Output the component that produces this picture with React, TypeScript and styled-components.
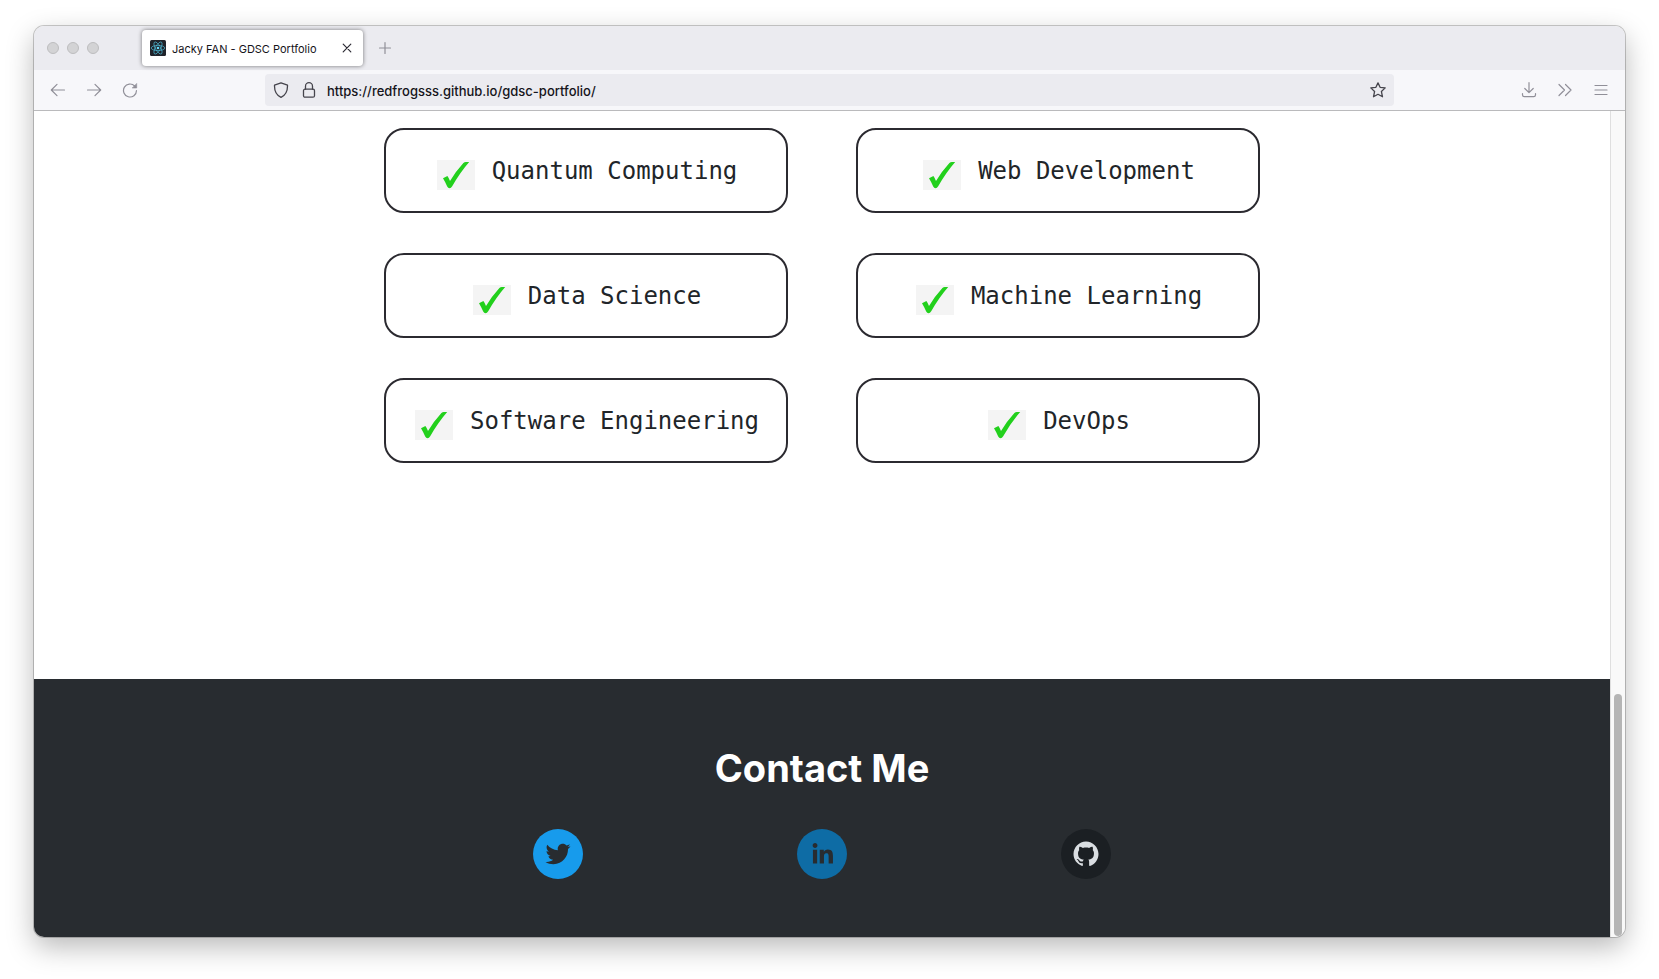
import React from "react";
import styled, { createGlobalStyle } from "styled-components";

const GlobalStyle = createGlobalStyle`
  *, *::before, *::after { box-sizing: border-box; }
  body {
    margin: 0;
    background: #ffffff;
    color: #212529;
    font-family: Inter, "Liberation Sans", sans-serif;
  }
  button, input { font: inherit; color: inherit; }
`;

const Desktop = styled.div`
  min-height: 100vh;
  padding: 26px 34px 42px;
  overflow: hidden;
`;

const BrowserWindow = styled.div`
  overflow: hidden;
  border-radius: 10px;
  background: #ffffff;
  box-shadow: 0 0 0 1px rgba(0, 0, 0, 0.2), 0 10px 28px rgba(0, 0, 0, 0.28);
`;

const TabBar = styled.header`
  display: flex;
  align-items: center;
  height: 44px;
  padding-left: 13px;
  background: #ebebf0;
`;

const WindowControls = styled.div`
  display: flex;
  gap: 8px;
  margin-right: 43px;
`;

const WindowDot = styled.button`
  width: 12px;
  height: 12px;
  padding: 0;
  border: 1px solid #bdbdbf;
  border-radius: 50%;
  background: #d3d3d5;
`;

const Tab = styled.div`
  display: flex;
  align-items: center;
  width: 221px;
  height: 36px;
  padding: 0 8px;
  border-radius: 4px;
  background: #ffffff;
  box-shadow: 0 0 4px rgba(0, 0, 0, 0.5);
`;

const TabTitle = styled.span`
  flex: 1;
  margin-left: 6px;
  padding-top: 2px;
  font-size: 11px;
  line-height: 16px;
  color: #15141a;
  white-space: nowrap;
`;

const IconButton = styled.button<{ $tone?: string }>`
  display: flex;
  align-items: center;
  justify-content: center;
  width: 16px;
  height: 16px;
  padding: 0;
  border: 0;
  background: none;
  color: ${(p) => p.$tone ?? "#908f98"};
`;

const NewTab = styled.div`
  margin-left: 14px;
`;

const Toolbar = styled.nav`
  display: flex;
  align-items: center;
  height: 41px;
  padding: 0 16px;
  border-bottom: 1px solid #bababc;
  background: #f7f7fa;
`;

const ToolGroup = styled.div`
  display: flex;
  gap: 20px;
`;

const AddressBar = styled.div`
  display: flex;
  flex: 1;
  align-items: center;
  height: 32px;
  margin: 0 127px;
  padding: 0 8px;
  gap: 12px;
  border-radius: 4px;
  background: #ebebf0;
`;

const AddressInput = styled.input`
  flex: 1;
  min-width: 0;
  padding: 2px 0 0;
  margin-left: -2px;
  border: 0;
  outline: 0;
  background: none;
  color: #15141a;
  font-size: 13px;
  font-weight: 500;
  line-height: 20px;
`;

const Viewport = styled.div`
  display: flex;
`;

const Page = styled.main`
  flex: 1;
  min-width: 0;
`;

const ScrollTrack = styled.div`
  display: flex;
  align-items: flex-end;
  width: 15px;
  padding: 1px 3px;
  border-left: 1px solid #dfdfdf;
  background: #f9f9f9;
`;

const ScrollThumb = styled.div`
  width: 8px;
  height: 242px;
  border-radius: 4px;
  background: #b5b5b5;
`;

const Skills = styled.ul`
  display: grid;
  grid-template-columns: 1fr 1fr;
  gap: 40px 68px;
  max-width: 876px;
  margin: 0 auto;
  padding: 17px 0 216px;
  list-style: none;
`;

const SkillCard = styled.li`
  display: flex;
  align-items: center;
  justify-content: center;
  gap: 17px;
  height: 85px;
  padding-left: 2px;
  border: 2px solid #2b2a30;
  border-radius: 20px;
`;

const SkillName = styled.span`
  font-family: "DejaVu Sans Mono", monospace;
  font-size: 24px;
  line-height: 36px;
  white-space: nowrap;
`;

const CheckTile = styled.svg`
  width: 38px;
  height: 30px;
  margin-top: 8px;
  background: #f4f4f4;
`;

const Footer = styled.footer`
  padding: 65px 0 58px;
  background: #282c30;
`;

const FooterTitle = styled.h2`
  margin: 0 0 37px;
  color: #ffffff;
  font-size: 38px;
  font-weight: 700;
  line-height: 48px;
  text-align: center;
`;

const SocialRow = styled.div`
  display: grid;
  grid-template-columns: repeat(3, 1fr);
  justify-items: center;
  max-width: 792px;
  margin: 0 auto;
`;

const SocialLink = styled.a<{ $disc: string; $glyph: string }>`
  width: 50px;
  height: 50px;
  border-radius: 50%;
  background: ${(p) => p.$disc};
  color: ${(p) => p.$glyph};

  svg { display: block; width: 50px; height: 50px; }
`;

const Line = ({ children, width = 1.2 }: { children: React.ReactNode; width?: number }) => (
  <svg
    width="16"
    height="16"
    viewBox="0 0 16 16"
    fill="none"
    stroke="currentColor"
    strokeWidth={width}
    strokeLinecap="round"
    strokeLinejoin="round"
    aria-hidden="true"
  >
    {children}
  </svg>
);

const Favicon = () => (
  <svg width="16" height="16" viewBox="0 0 16 16" aria-hidden="true">
    <rect width="16" height="16" rx="1.5" fill="#20232a" />
    <g fill="none" stroke="#4fb6d2" strokeWidth="0.7">
      <ellipse cx="8" cy="8" rx="6.8" ry="2.6" />
      <ellipse cx="8" cy="8" rx="6.8" ry="2.6" transform="rotate(60 8 8)" />
      <ellipse cx="8" cy="8" rx="6.8" ry="2.6" transform="rotate(120 8 8)" />
    </g>
    <circle cx="8" cy="8" r="1.3" fill="#61dafb" />
  </svg>
);

const Check = () => (
  <CheckTile viewBox="0 0 38 30" aria-hidden="true">
    <path d="M6 18.2L10.4 16.1Q11.800 18 13 21Q19 11 26.400 3Q27.600 1.900 29 2H32.200Q23 12.500 15.200 26.300Q14 28.200 12.600 28.200Q11 28.200 10.200 26.500Q8.600 22.500 6 18.200Z" fill="#22d01c" />
  </CheckTile>
);

const skills = [
  "Quantum Computing",
  "Web Development",
  "Data Science",
  "Machine Learning",
  "Software Engineering",
  "DevOps",
];

const socials = [
  {
    name: "Twitter",
    href: "https://twitter.com/",
    disc: "#179bec",
    glyph: "#282c30",
    path: "M48,22.1c-1.2,0.5-2.4,0.9-3.8,1c1.4-0.8,2.4-2.1,2.9-3.6c-1.3,0.8-2.7,1.3-4.2,1.6C41.7,19.8,40,19,38.2,19c-3.6,0-6.6,2.9-6.6,6.6c0,0.5,0.1,1,0.2,1.5c-5.5-0.3-10.3-2.9-13.5-6.9c-0.6,1-0.9,2.1-0.9,3.3c0,2.3,1.2,4.3,2.9,5.5c-1.1,0-2.1-0.3-3-0.8c0,0,0,0.1,0,0.1c0,3.2,2.3,5.8,5.3,6.4c-0.6,0.1-1.1,0.2-1.7,0.2c-0.4,0-0.8,0-1.2-0.1c0.8,2.6,3.3,4.5,6.1,4.6c-2.2,1.8-5.1,2.8-8.2,2.8c-0.5,0-1.1,0-1.6-0.1c2.9,1.9,6.4,2.9,10.1,2.9c12.1,0,18.7-10,18.7-18.7c0-0.3,0-0.6,0-0.8C46,24.5,47.1,23.4,48,22.1z",
  },
  {
    name: "LinkedIn",
    href: "https://www.linkedin.com/",
    disc: "#0e6ca5",
    glyph: "#282c30",
    path: "M20.4,44h5.4V26.6h-5.4V44z M23.1,18c-1.7,0-3.1,1.4-3.1,3.1c0,1.7,1.4,3.1,3.1,3.1c1.7,0,3.1-1.4,3.1-3.1C26.2,19.4,24.8,18,23.1,18z M39.5,26.2c-2.6,0-4.4,1.4-5.1,2.8h-0.1v-2.4h-5.2V44h5.4v-8.6c0-2.3,0.4-4.5,3.2-4.5c2.8,0,2.8,2.6,2.8,4.6V44H46v-9.5C46,29.8,45,26.2,39.5,26.2z",
  },
  {
    name: "GitHub",
    href: "https://github.com/redfrogsss",
    disc: "#1b1f23",
    glyph: "#dadee2",
    path: "M32,16c-8.8,0-16,7.2-16,16c0,7.1,4.6,13.1,10.9,15.2c0.8,0.1,1.1-0.3,1.1-0.8c0-0.4,0-1.4,0-2.7c-4.5,1-5.4-2.1-5.4-2.1c-0.7-1.8-1.8-2.3-1.8-2.3c-1.5-1,0.1-1,0.1-1c1.6,0.1,2.5,1.6,2.5,1.6c1.4,2.4,3.7,1.7,4.7,1.3c0.1-1,0.6-1.7,1-2.1c-3.6-0.4-7.3-1.8-7.3-7.9c0-1.7,0.6-3.2,1.6-4.3c-0.2-0.4-0.7-2,0.2-4.2c0,0,1.3-0.4,4.4,1.6c1.3-0.4,2.6-0.5,4-0.5c1.4,0,2.7,0.2,4,0.5c3.1-2.1,4.4-1.6,4.4-1.6c0.9,2.2,0.3,3.8,0.2,4.2c1,1.1,1.6,2.5,1.6,4.3c0,6.1-3.7,7.5-7.3,7.9c0.6,0.5,1.1,1.5,1.1,3c0,2.1,0,3.9,0,4.4c0,0.4,0.3,0.9,1.1,0.8C43.4,45.1,48,39.1,48,32C48,23.2,40.8,16,32,16z",
  },
];

export default function App() {
  return (
    <Desktop>
      <GlobalStyle />
      <BrowserWindow>
        <TabBar>
          <WindowControls>
            <WindowDot aria-label="Close window" />
            <WindowDot aria-label="Minimize window" />
            <WindowDot aria-label="Zoom window" />
          </WindowControls>
          <Tab>
            <Favicon />
            <TabTitle>Jacky FAN - GDSC Portfolio</TabTitle>
            <IconButton $tone="#2b2a33" aria-label="Close tab">
              <Line><path d="M4.200 4.200L11.800 11.800M11.800 4.200L4.200 11.800" /></Line>
            </IconButton>
          </Tab>
          <NewTab>
            <IconButton aria-label="New tab">
              <Line><path d="M8 2.500V13.500M2.500 8H13.500" /></Line>
            </IconButton>
          </NewTab>
        </TabBar>
        <Toolbar aria-label="Navigation">
          <ToolGroup>
            <IconButton aria-label="Back">
              <Line><path d="M14.500 8H1.500M7 2.300L1.300 8L7 13.700" /></Line>
            </IconButton>
            <IconButton aria-label="Forward">
              <Line><path d="M1.500 8H14.500M9 2.300L14.700 8L9 13.700" /></Line>
            </IconButton>
            <IconButton aria-label="Reload">
              <Line>
                <path d="M14.500 8.500A6.500 6.500 0 1 1 12.700 4" />
                <path d="M14.700 1.800V6H10.500Z" fill="currentColor" strokeWidth="0.6" />
              </Line>
            </IconButton>
          </ToolGroup>
          <AddressBar>
            <IconButton $tone="#45444c" aria-label="Tracking protection">
              <Line width={1.3}><path d="M8 0.800L14.500 3.200C14.700 9 12.800 13 8 15.300C3.200 13 1.300 9 1.500 3.200Z" /></Line>
            </IconButton>
            <IconButton $tone="#45444c" aria-label="Site information">
              <Line width={1.3}>
                <rect x="2.500" y="7.200" width="11" height="8" rx="1.500" />
                <path d="M4.500 7.200V4.200A3.500 3.500 0 0 1 11.500 4.200V7.200" />
              </Line>
            </IconButton>
            <AddressInput
              aria-label="Address"
              type="text"
              defaultValue="https://redfrogsss.github.io/gdsc-portfolio/"
            />
            <IconButton $tone="#45444c" aria-label="Bookmark this page">
              <Line width={1.3}>
                <path d="M8 0.900L10.100 5.300L15.200 5.900L11.400 9.500L12.500 14.800L8 12.300L3.500 14.800L4.600 9.500L0.800 5.900L5.900 5.300Z" />
              </Line>
            </IconButton>
          </AddressBar>
          <ToolGroup>
            <IconButton aria-label="Downloads">
              <Line>
                <path d="M8 0.700V10.500M3.800 6.500L8 10.700L12.200 6.500M1.500 11.500V13A1.800 1.800 0 0 0 3.300 14.700H12.700A1.800 1.800 0 0 0 14.500 13V11.500" />
              </Line>
            </IconButton>
            <IconButton aria-label="More tools">
              <Line><path d="M2 2.500L7.500 8L2 13.500M8.500 2.500L14 8L8.500 13.500" /></Line>
            </IconButton>
            <IconButton aria-label="Open application menu">
              <Line><path d="M2 3.500H14M2 8H14M2 12.500H14" /></Line>
            </IconButton>
          </ToolGroup>
        </Toolbar>
        <Viewport>
          <Page>
            <Skills>
              {skills.map((skill) => (
                <SkillCard key={skill}>
                  <Check />
                  <SkillName>{skill}</SkillName>
                </SkillCard>
              ))}
            </Skills>
            <Footer>
              <FooterTitle>Contact Me</FooterTitle>
              <SocialRow>
                {socials.map((s) => (
                  <SocialLink key={s.name} href={s.href} aria-label={s.name} $disc={s.disc} $glyph={s.glyph}>
                    <svg viewBox="0 0 64 64" fill="currentColor" aria-hidden="true">
                      <path d={s.path} />
                    </svg>
                  </SocialLink>
                ))}
              </SocialRow>
            </Footer>
          </Page>
          <ScrollTrack>
            <ScrollThumb />
          </ScrollTrack>
        </Viewport>
      </BrowserWindow>
    </Desktop>
  );
}
